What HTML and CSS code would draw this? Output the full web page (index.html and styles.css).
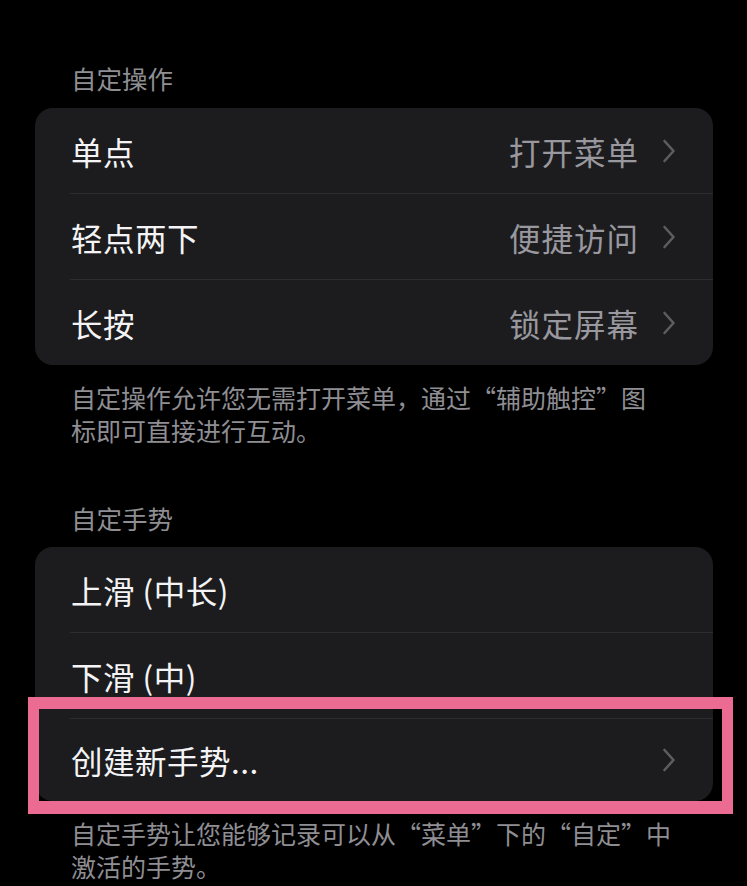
FILE: index.html
```html
<!DOCTYPE html>
<html lang="zh-CN">
<head>
	<meta charset="utf-8">
	<title>辅助触控</title>
	<link rel="stylesheet" href="styles.css">
</head>
<body>
	<div class="page">
		<div class="section-title">自定操作</div>
		<div class="card">
			<div class="row">
				<span class="row-label">单点</span>
				<span class="row-value">打开菜单</span>
				<svg class="chevron" width="14" height="24" viewBox="0 0 14 24"><polyline points="2.5,2 11.5,12 2.5,22"/></svg>
			</div>
			<div class="row">
				<span class="row-label">轻点两下</span>
				<span class="row-value">便捷访问</span>
				<svg class="chevron" width="14" height="24" viewBox="0 0 14 24"><polyline points="2.5,2 11.5,12 2.5,22"/></svg>
			</div>
			<div class="row">
				<span class="row-label">长按</span>
				<span class="row-value">锁定屏幕</span>
				<svg class="chevron" width="14" height="24" viewBox="0 0 14 24"><polyline points="2.5,2 11.5,12 2.5,22"/></svg>
			</div>
		</div>
		<div class="section-foot">自定操作允许您无需打开菜单，通过“辅助触控”图标即可直接进行互动。</div>

		<div class="section-title second">自定手势</div>
		<div class="card">
			<div class="row">
				<span class="row-label">上滑 (中长)</span>
			</div>
			<div class="row">
				<span class="row-label">下滑 (中)</span>
			</div>
			<div class="row last">
				<span class="row-label">创建新手势...</span>
				<svg class="chevron" width="14" height="24" viewBox="0 0 14 24"><polyline points="2.5,2 11.5,12 2.5,22"/></svg>
			</div>
		</div>
		<div class="section-foot wide">自定手势让您能够记录可以从“菜单”下的“自定”中激活的手势。</div>

		<div class="highlight"></div>
	</div>
</body>
</html>
```

FILE: styles.css
```css
*{
	margin: 0;
	padding: 0;
	box-sizing: border-box;
}

body{
	background-color: #000;
	font-family: "Noto Sans CJK SC", "Noto Sans", sans-serif;
	color: #f2f2f4;
}

.page{
	position: relative;
	width: 747px;
	height: 886px;
	padding: 61px 34px 0 35px;
	overflow: hidden;
}

.section-title{
	padding-left: 36px;
	font-size: 25.5px;
	line-height: 33px;
	color: #8e8e93;
	margin-bottom: 14px;
}

.section-title.second{
	margin-top: 54px;
	margin-bottom: 13px;
}

.card{
	background-color: #1c1c1e;
	border-radius: 18px;
	overflow: hidden;
}

.row{
	display: flex;
	align-items: center;
	height: 86px;
	margin-left: 35px;
	padding-right: 37px;
	border-bottom: 1px solid #2e2e31;
}

.row:last-child{
	border-bottom: none;
	height: 85px;
}

.row.last{
	height: 82px;
}

.row-label{
	flex: 1;
	font-size: 31.5px;
	letter-spacing: 0.5px;
	color: #f4f4f6;
	padding-left: 1px;
}

.row-value{
	font-size: 31.5px;
	letter-spacing: 1px;
	color: #98989e;
	margin-right: 23px;
}

.chevron{
	display: block;
	fill: none;
	stroke: #5c5c61;
	stroke-width: 2.6;
	stroke-linecap: round;
	stroke-linejoin: round;
}

.section-foot{
	margin-top: 16px;
	padding-left: 36px;
	padding-right: 50px;
	font-size: 25px;
	line-height: 33px;
	color: #8e8e93;
}

.section-foot.wide{
	padding-right: 30px;
}

.highlight{
	position: absolute;
	left: 28px;
	top: 697px;
	width: 705px;
	height: 117px;
	border: 11px solid #ec6b93;
	border-top-width: 12px;
	border-bottom-width: 13px;
}
```
